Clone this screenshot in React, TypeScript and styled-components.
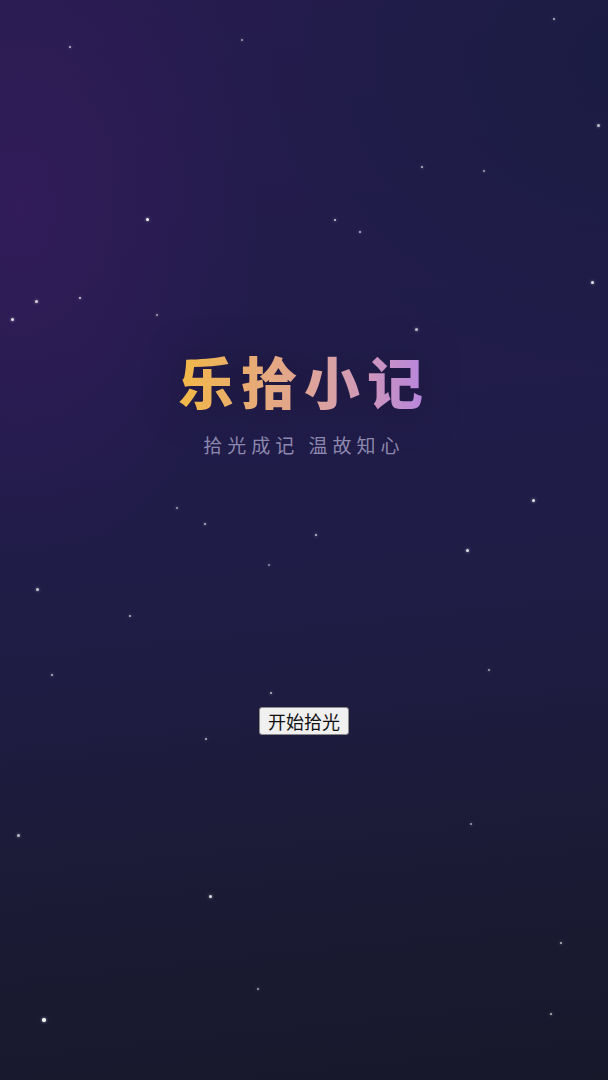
import React from "react";
import styled, { createGlobalStyle } from "styled-components";

const GlobalStyle = createGlobalStyle`
  html, body {
    margin: 0;
    padding: 0;
    background: #1a1a2c;
  }
  * {
    box-sizing: border-box;
  }
`;

// 星星的位置 (x, y, 大小, 透明度)
const stars: [number, number, number, number][] = [
  [554, 19, 2, 0.7],
  [70, 47, 2.5, 0.7],
  [242, 40, 2, 0.6],
  [147, 219, 3, 0.95],
  [335, 220, 2.5, 0.8],
  [360, 232, 2.5, 0.7],
  [422, 167, 2, 0.7],
  [484, 171, 2, 0.6],
  [598, 125, 3, 0.7],
  [592, 282, 3, 0.85],
  [36, 301, 3, 0.8],
  [80, 298, 2.5, 0.8],
  [12, 319, 3, 0.85],
  [157, 315, 2.5, 0.6],
  [416, 329, 3, 0.7],
  [533, 500, 3, 0.85],
  [177, 508, 2, 0.6],
  [205, 524, 2.5, 0.7],
  [316, 535, 2.5, 0.75],
  [467, 550, 3, 0.85],
  [269, 565, 2, 0.5],
  [37, 589, 3, 0.75],
  [130, 616, 2, 0.7],
  [489, 670, 2, 0.6],
  [52, 675, 2, 0.7],
  [271, 693, 2.5, 0.7],
  [206, 739, 2.5, 0.7],
  [18, 835, 3, 0.7],
  [471, 824, 2, 0.6],
  [210, 896, 3, 0.85],
  [561, 943, 2.5, 0.7],
  [258, 989, 2.5, 0.6],
  [44, 1020, 3.5, 0.95],
  [551, 1014, 2.5, 0.7],
];

const App = () => {
  return (
    <>
      <GlobalStyle />
      <Screen>
        <StarField>
          {stars.map(([x, y, size, alpha], i) => (
            <Star
              key={i}
              style={{
                left: x - size / 2,
                top: y - size / 2,
                width: size,
                height: size,
                opacity: alpha,
              }}
            />
          ))}
        </StarField>
        <Hero>
          <Title>乐拾小记</Title>
          <Slogan>拾光成记 温故知心</Slogan>
        </Hero>
        <StartButton type="button">开始拾光</StartButton>
      </Screen>
    </>
  );
};

export default App;

const Screen = styled.div`
  position: relative;
  width: 100%;
  min-height: 100vh;
  overflow: hidden;
  display: flex;
  flex-direction: column;
  align-items: center;
  background:
    radial-gradient(
      ellipse 240px 360px at 20px 210px,
      rgba(56, 28, 96, 0.7) 0%,
      rgba(56, 28, 96, 0) 100%
    ),
    radial-gradient(
      ellipse 380px 320px at 630px 60px,
      rgba(24, 28, 64, 0.85) 0%,
      rgba(24, 28, 64, 0) 100%
    ),
    linear-gradient(
      174deg,
      #251c4d 0%,
      #211c4a 35%,
      #1f1c46 55%,
      #1c1b38 75%,
      #17182a 100%
    );
`;

const StarField = styled.div`
  position: absolute;
  inset: 0;
  pointer-events: none;
`;

const Star = styled.span`
  position: absolute;
  border-radius: 50%;
  background: #ffffff;
  box-shadow: 0 0 3px rgba(255, 255, 255, 0.7);
`;

const Hero = styled.div`
  position: relative;
  margin-top: 344px;
  display: flex;
  flex-direction: column;
  align-items: center;
  gap: 16px;
`;

const Title = styled.h1`
  margin: 0;
  font-family: "Noto Sans CJK SC", "Noto Sans", sans-serif;
  font-size: 56px;
  font-weight: 900;
  line-height: 72px;
  letter-spacing: 7px;
  background: linear-gradient(90deg, #f2b846 0%, #e6a97e 35%, #d9a0a6 62%, #b584e0 100%);
  -webkit-background-clip: text;
  background-clip: text;
  color: transparent;
  filter: drop-shadow(0 0 18px rgba(20, 14, 40, 0.5));
`;

const Slogan = styled.p`
  margin: 0;
  font-family: "Noto Sans CJK SC", "Noto Sans", sans-serif;
  font-size: 19px;
  line-height: 26px;
  letter-spacing: 5px;
  color: rgba(186, 182, 216, 0.72);
`;

const StartButton = styled.button`
  position: relative;
  margin-top: 249px;
  font-family: "Noto Sans CJK SC", "Noto Sans", sans-serif;
  font-size: 18px;
  line-height: 24px;
  padding: 1px 8px;
  color: #111111;
  background: #f0f0f0;
  border: 1px solid #8a8a8a;
  border-radius: 3px;
  cursor: pointer;
`;
